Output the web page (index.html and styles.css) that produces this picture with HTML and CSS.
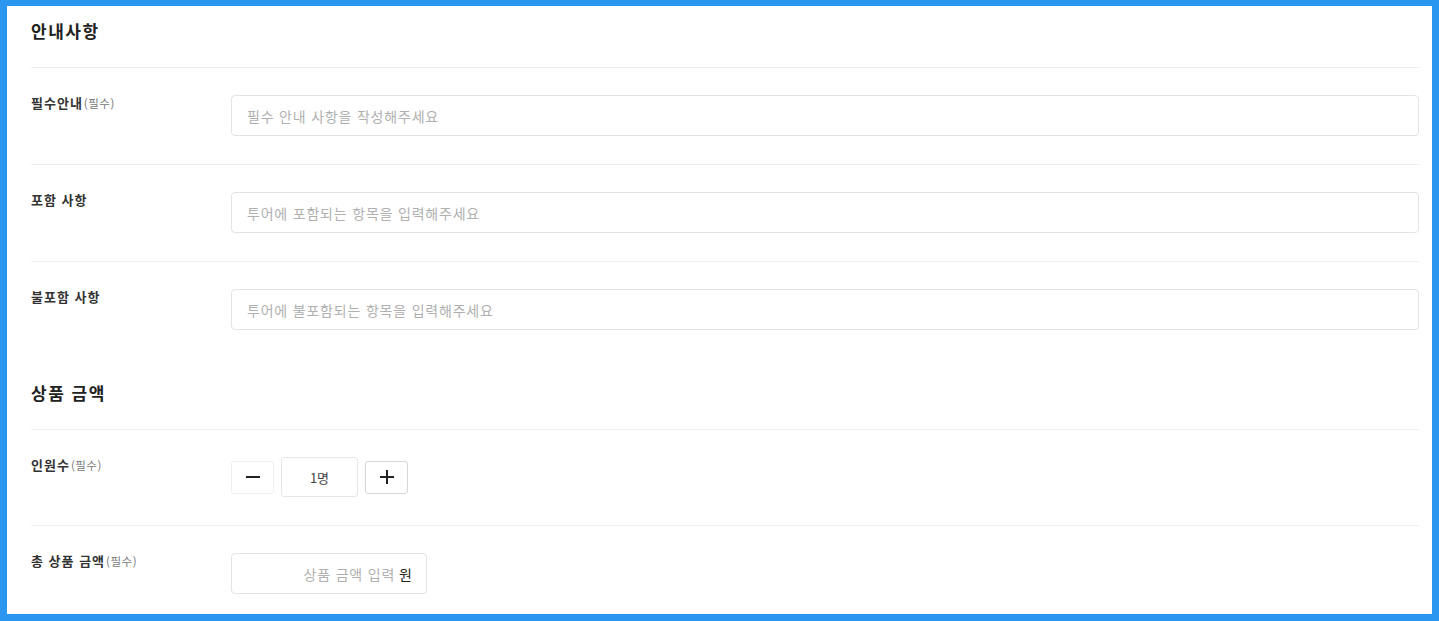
FILE: index.html
```html
<!DOCTYPE html>
<html lang="ko">
<head>
    <meta charset="UTF-8">
    <meta name="viewport" content="width=device-width, initial-scale=1.0">
    <title>상품 등록</title>
    <link rel="stylesheet" href="styles.css">
</head>
<body>

    <div class="frame">

        <!-- 안내사항 -->
        <h3 class="section-title">안내사항</h3>

        <div class="form-row">
            <div class="form-label">필수안내<span class="required">(필수)</span></div>
            <div class="form-field">
                <input type="text" class="text-input" placeholder="필수 안내 사항을 작성해주세요">
            </div>
        </div>

        <div class="form-row">
            <div class="form-label">포함 사항</div>
            <div class="form-field">
                <input type="text" class="text-input" placeholder="투어에 포함되는 항목을 입력해주세요">
            </div>
        </div>

        <div class="form-row last">
            <div class="form-label">불포함 사항</div>
            <div class="form-field">
                <input type="text" class="text-input" placeholder="투어에 불포함되는 항목을 입력해주세요">
            </div>
        </div>

        <!-- 상품 금액 -->
        <h3 class="section-title second">상품 금액</h3>

        <div class="form-row">
            <div class="form-label">인원수<span class="required">(필수)</span></div>
            <div class="form-field">
                <div class="counter">
                    <button class="counter-btn minus" type="button" aria-label="감소">
                        <svg width="16" height="16" viewBox="0 0 16 16"><path d="M1 8h14" stroke="#222" stroke-width="2"/></svg>
                    </button>
                    <div class="counter-value">1명</div>
                    <button class="counter-btn plus" type="button" aria-label="증가">
                        <svg width="16" height="16" viewBox="0 0 16 16"><path d="M1 8h14M8 1v14" stroke="#222" stroke-width="2"/></svg>
                    </button>
                </div>
            </div>
        </div>

        <div class="form-row last">
            <div class="form-label">총 상품 금액<span class="required">(필수)</span></div>
            <div class="form-field">
                <div class="price-box">
                    <input type="text" class="price-input" placeholder="상품 금액 입력">
                    <span class="unit">원</span>
                </div>
            </div>
        </div>

    </div>

</body>
</html>
```

FILE: styles.css
```css
html, body {
    margin: 0;
    padding: 0;
    height: 100%;
}

body {
    font-family: "Noto Sans CJK KR", "Noto Sans", sans-serif;
    color: #333;
    background: #fff;
}

/* 파란 테두리 */
.frame {
    height: 100vh;
    box-sizing: border-box;
    border: 7px solid #2b96ef;
    border-top-width: 6px;
    padding: 0 13px 0 24px;
    overflow: hidden;
}

/* Section titles */
.section-title {
    margin: 0;
    padding: 13px 0 24px;
    font-size: 17px;
    line-height: 24px;
    font-weight: bold;
    letter-spacing: 1.5px;
    color: #222;
    border-bottom: 1px solid #eee;
}

.section-title.second {
    padding-top: 23px;
}

/* Rows */
.form-row {
    display: flex;
    align-items: flex-start;
    padding: 27px 0 28px;
    border-bottom: 1px solid #eee;
}

.form-row.last {
    border-bottom: none;
}

.form-label {
    width: 200px;
    flex-shrink: 0;
    font-size: 13px;
    line-height: 16px;
    font-weight: bold;
    letter-spacing: 1px;
    color: #333;
}

.required {
    font-size: 11.5px;
    font-weight: normal;
    letter-spacing: 0.5px;
    color: #777;
    margin-left: 1px;
}

.form-field {
    flex: 1;
}

.text-input {
    width: 100%;
    height: 41px;
    box-sizing: border-box;
    border: 1px solid #e3e3e3;
    border-radius: 4px;
    padding: 0 15px;
    font-family: inherit;
    font-size: 14px;
    letter-spacing: 0.8px;
    color: #333;
    outline: none;
}

.text-input::placeholder,
.price-input::placeholder {
    color: #b0b0b0;
}

/* 인원수 counter */
.counter {
    display: flex;
    align-items: center;
    gap: 7px;
}

.counter-btn {
    width: 43px;
    height: 33px;
    box-sizing: border-box;
    background: #fff;
    border: 1px solid #eee;
    border-radius: 3px;
    padding: 0;
    display: flex;
    align-items: center;
    justify-content: center;
    cursor: pointer;
}

.counter-btn.plus {
    border-color: #d6d6d6;
}

.counter-value {
    width: 77px;
    height: 40px;
    box-sizing: border-box;
    border: 1px solid #e6e6e6;
    border-radius: 3px;
    display: flex;
    align-items: center;
    justify-content: center;
    font-size: 13px;
    color: #444;
}

/* 총 상품 금액 */
.price-box {
    width: 196px;
    height: 41px;
    box-sizing: border-box;
    border: 1px solid #e3e3e3;
    border-radius: 4px;
    display: flex;
    align-items: center;
    padding: 0 14px 0 10px;
}

.price-input {
    flex: 1;
    min-width: 0;
    border: none;
    outline: none;
    text-align: right;
    font-family: inherit;
    font-size: 14px;
    letter-spacing: 0.8px;
    color: #333;
    padding: 0 4px 0 0;
}

.unit {
    font-size: 14px;
    color: #222;
}
```
